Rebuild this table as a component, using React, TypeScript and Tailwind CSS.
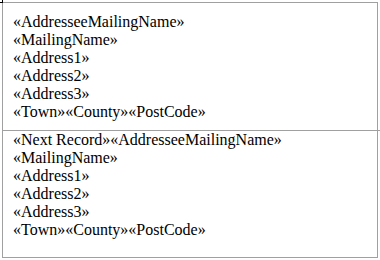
import React from "react";

const rows1 = [
  "«AddresseeMailingName»",
  "«MailingName»",
  "«Address1»",
  "«Address2»",
  "«Address3»",
  "«Town»«County»«PostCode»",
];
const rows2 = [
  "«Next Record»«AddresseeMailingName»",
  "«MailingName»",
  "«Address1»",
  "«Address2»",
  "«Address3»",
  "«Town»«County»«PostCode»",
];

export default function App() {
  return (
    <div
      className="relative w-[380px] h-[260px] bg-white pl-[2px] pt-[2px] text-black"
      style={{ fontFamily: '"Liberation Serif", "Times New Roman", serif' }}
    >
      <div className="absolute left-[2px] top-0 w-px h-[3px] bg-black" />
      <div className="absolute left-0 top-[2px] w-[3px] h-px bg-black" />
      <div className="absolute left-[378px] top-[130px] w-[2px] h-px bg-[#a0a0a0]" />
      <div className="w-[376px] border border-[#a0a0a0] flex flex-col">
        <div className="h-[128px] border-b border-[#a0a0a0] pt-[10px] pl-[10px] text-[16px] leading-[18px]">
          {rows1.map((t, i) => (
            <div key={i}>{t}</div>
          ))}
        </div>
        <div className="h-[126px] pl-[10px] text-[16px] leading-[18px]">
          {rows2.map((t, i) => (
            <div key={i}>{t}</div>
          ))}
        </div>
      </div>
    </div>
  );
}
